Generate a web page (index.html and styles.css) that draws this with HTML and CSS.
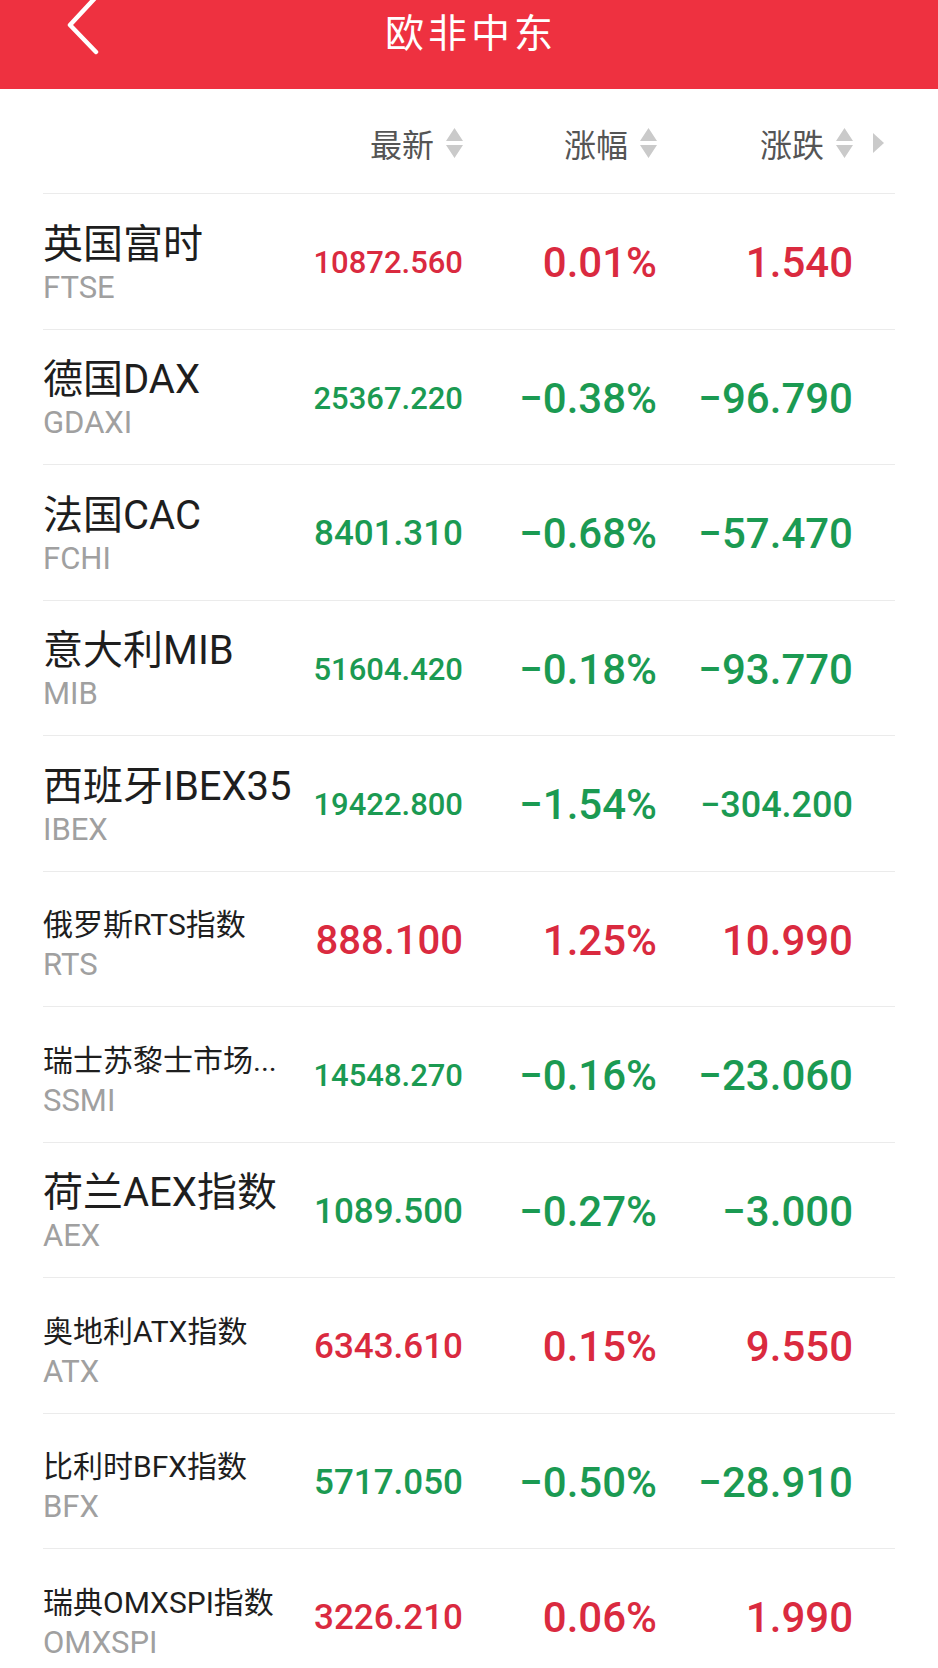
FILE: index.html
```html
<!DOCTYPE html>
<html lang="zh-CN">
<head>
<meta charset="utf-8">
<title>欧非中东</title>
<link rel="stylesheet" href="styles.css">
</head>
<body>
<header class="topbar">
  <svg class="back" viewBox="0 0 44 56"><polyline points="38,-3 12,25 38,52" fill="none" stroke="#fff" stroke-width="4.5" stroke-linecap="round" stroke-linejoin="round"/></svg>
  <div class="title">欧非中东</div>
  <div></div>
</header>
<main class="list">
  <div class="grid head">
    <div></div>
    <div class="hcell">最新<svg class="sort" viewBox="0 0 17 30"><path d="M8.5 0 L17 13 H0 Z M0 17 H17 L8.5 30 Z" fill="#cacaca"/></svg></div>
    <div class="hcell">涨幅<svg class="sort" viewBox="0 0 17 30"><path d="M8.5 0 L17 13 H0 Z M0 17 H17 L8.5 30 Z" fill="#cacaca"/></svg></div>
    <div class="hcell">涨跌<svg class="sort" viewBox="0 0 17 30"><path d="M8.5 0 L17 13 H0 Z M0 17 H17 L8.5 30 Z" fill="#cacaca"/></svg></div>
    <div class="hmore"><svg class="more" viewBox="0 0 11 20"><path d="M0 0 L11 10 L0 20 Z" fill="#cacaca"/></svg></div>
  </div>

  <div class="grid row up">
    <div class="namecol"><div class="name">英国富时</div><div class="code">FTSE</div></div>
    <div class="val v-s">10872.560</div><div class="val">0.01%</div><div class="val">1.540</div><div></div>
  </div>
  <div class="grid row down">
    <div class="namecol"><div class="name">德国DAX</div><div class="code">GDAXI</div></div>
    <div class="val v-s">25367.220</div><div class="val">−0.38%</div><div class="val">−96.790</div><div></div>
  </div>
  <div class="grid row down">
    <div class="namecol"><div class="name">法国CAC</div><div class="code">FCHI</div></div>
    <div class="val v-m">8401.310</div><div class="val">−0.68%</div><div class="val">−57.470</div><div></div>
  </div>
  <div class="grid row down">
    <div class="namecol"><div class="name">意大利MIB</div><div class="code">MIB</div></div>
    <div class="val v-s">51604.420</div><div class="val">−0.18%</div><div class="val">−93.770</div><div></div>
  </div>
  <div class="grid row down">
    <div class="namecol"><div class="name">西班牙IBEX35</div><div class="code">IBEX</div></div>
    <div class="val v-s">19422.800</div><div class="val">−1.54%</div><div class="val v-d">−304.200</div><div></div>
  </div>
  <div class="grid row up">
    <div class="namecol"><div class="name"><span class="sm">俄罗斯RTS指数</span></div><div class="code">RTS</div></div>
    <div class="val v-l">888.100</div><div class="val">1.25%</div><div class="val">10.990</div><div></div>
  </div>
  <div class="grid row down">
    <div class="namecol"><div class="name"><span class="sm">瑞士苏黎士市场...</span></div><div class="code">SSMI</div></div>
    <div class="val v-s">14548.270</div><div class="val">−0.16%</div><div class="val">−23.060</div><div></div>
  </div>
  <div class="grid row down">
    <div class="namecol"><div class="name">荷兰AEX指数</div><div class="code">AEX</div></div>
    <div class="val v-m">1089.500</div><div class="val">−0.27%</div><div class="val">−3.000</div><div></div>
  </div>
  <div class="grid row up">
    <div class="namecol"><div class="name"><span class="sm">奥地利ATX指数</span></div><div class="code">ATX</div></div>
    <div class="val v-m">6343.610</div><div class="val">0.15%</div><div class="val">9.550</div><div></div>
  </div>
  <div class="grid row down">
    <div class="namecol"><div class="name"><span class="sm">比利时BFX指数</span></div><div class="code">BFX</div></div>
    <div class="val v-m">5717.050</div><div class="val">−0.50%</div><div class="val">−28.910</div><div></div>
  </div>
  <div class="grid row up">
    <div class="namecol"><div class="name"><span class="sm">瑞典OMXSPI指数</span></div><div class="code">OMXSPI</div></div>
    <div class="val v-m">3226.210</div><div class="val">0.06%</div><div class="val">1.990</div><div></div>
  </div>
</main>
</body>
</html>
```
FILE: styles.css
```css
* { box-sizing: border-box; }

html, body {
  margin: 0;
  background: #ffffff;
}

body {
  font-family: Roboto, "Noto Sans CJK SC", sans-serif;
  overflow: hidden;
}

.topbar {
  height: 89px;
  background: #ee3140;
  display: grid;
  grid-template-columns: 1fr auto 1fr;
  align-items: start;
}

.back {
  display: block;
  width: 44px;
  height: 56px;
  margin-left: 58px;
}

.title {
  color: #ffffff;
  font-family: "Noto Sans CJK SC", sans-serif;
  font-size: 39px;
  line-height: 60px;
  letter-spacing: 4px;
  padding-left: 4px;
}

.list {
  margin: 0 43px;
}

.grid {
  display: grid;
  grid-template-columns: 257px 163px 194px 196px 42px;
  align-items: center;
}

.head {
  height: 105px;
  padding-top: 3px;
  border-bottom: 1px solid #ebebeb;
}

.hcell {
  display: flex;
  justify-content: flex-end;
  align-items: center;
  gap: 12px;
  font-family: "Noto Sans CJK SC", sans-serif;
  font-size: 32px;
  color: #555555;
}

.sort {
  display: block;
  width: 17px;
  height: 30px;
}

.hmore {
  display: flex;
  align-items: center;
  padding-left: 20px;
}

.more {
  display: block;
  width: 11px;
  height: 20px;
}

.row {
  height: 135.5px;
  padding-top: 4px;
  border-bottom: 1px solid #ebebeb;
}

.namecol {
  display: flex;
  flex-direction: column;
  white-space: nowrap;
  padding-top: 3px;
}

.name {
  font-size: 40px;
  line-height: 46px;
  color: #1e1e1e;
}

.name .sm {
  font-size: 30px;
  line-height: 1;
}

.code {
  font-size: 31px;
  line-height: 40px;
  color: #a0a0a0;
}

.val {
  text-align: right;
  white-space: nowrap;
  font-weight: 500;
  font-size: 42px;
  line-height: 50px;
}

.val.v-s { font-size: 31px; }
.val.v-m { font-size: 35px; }
.val.v-l { font-size: 40px; }
.val.v-d { font-size: 36px; }

.up .val { color: #da2a3f; }
.down .val { color: #1b9a52; }
```
